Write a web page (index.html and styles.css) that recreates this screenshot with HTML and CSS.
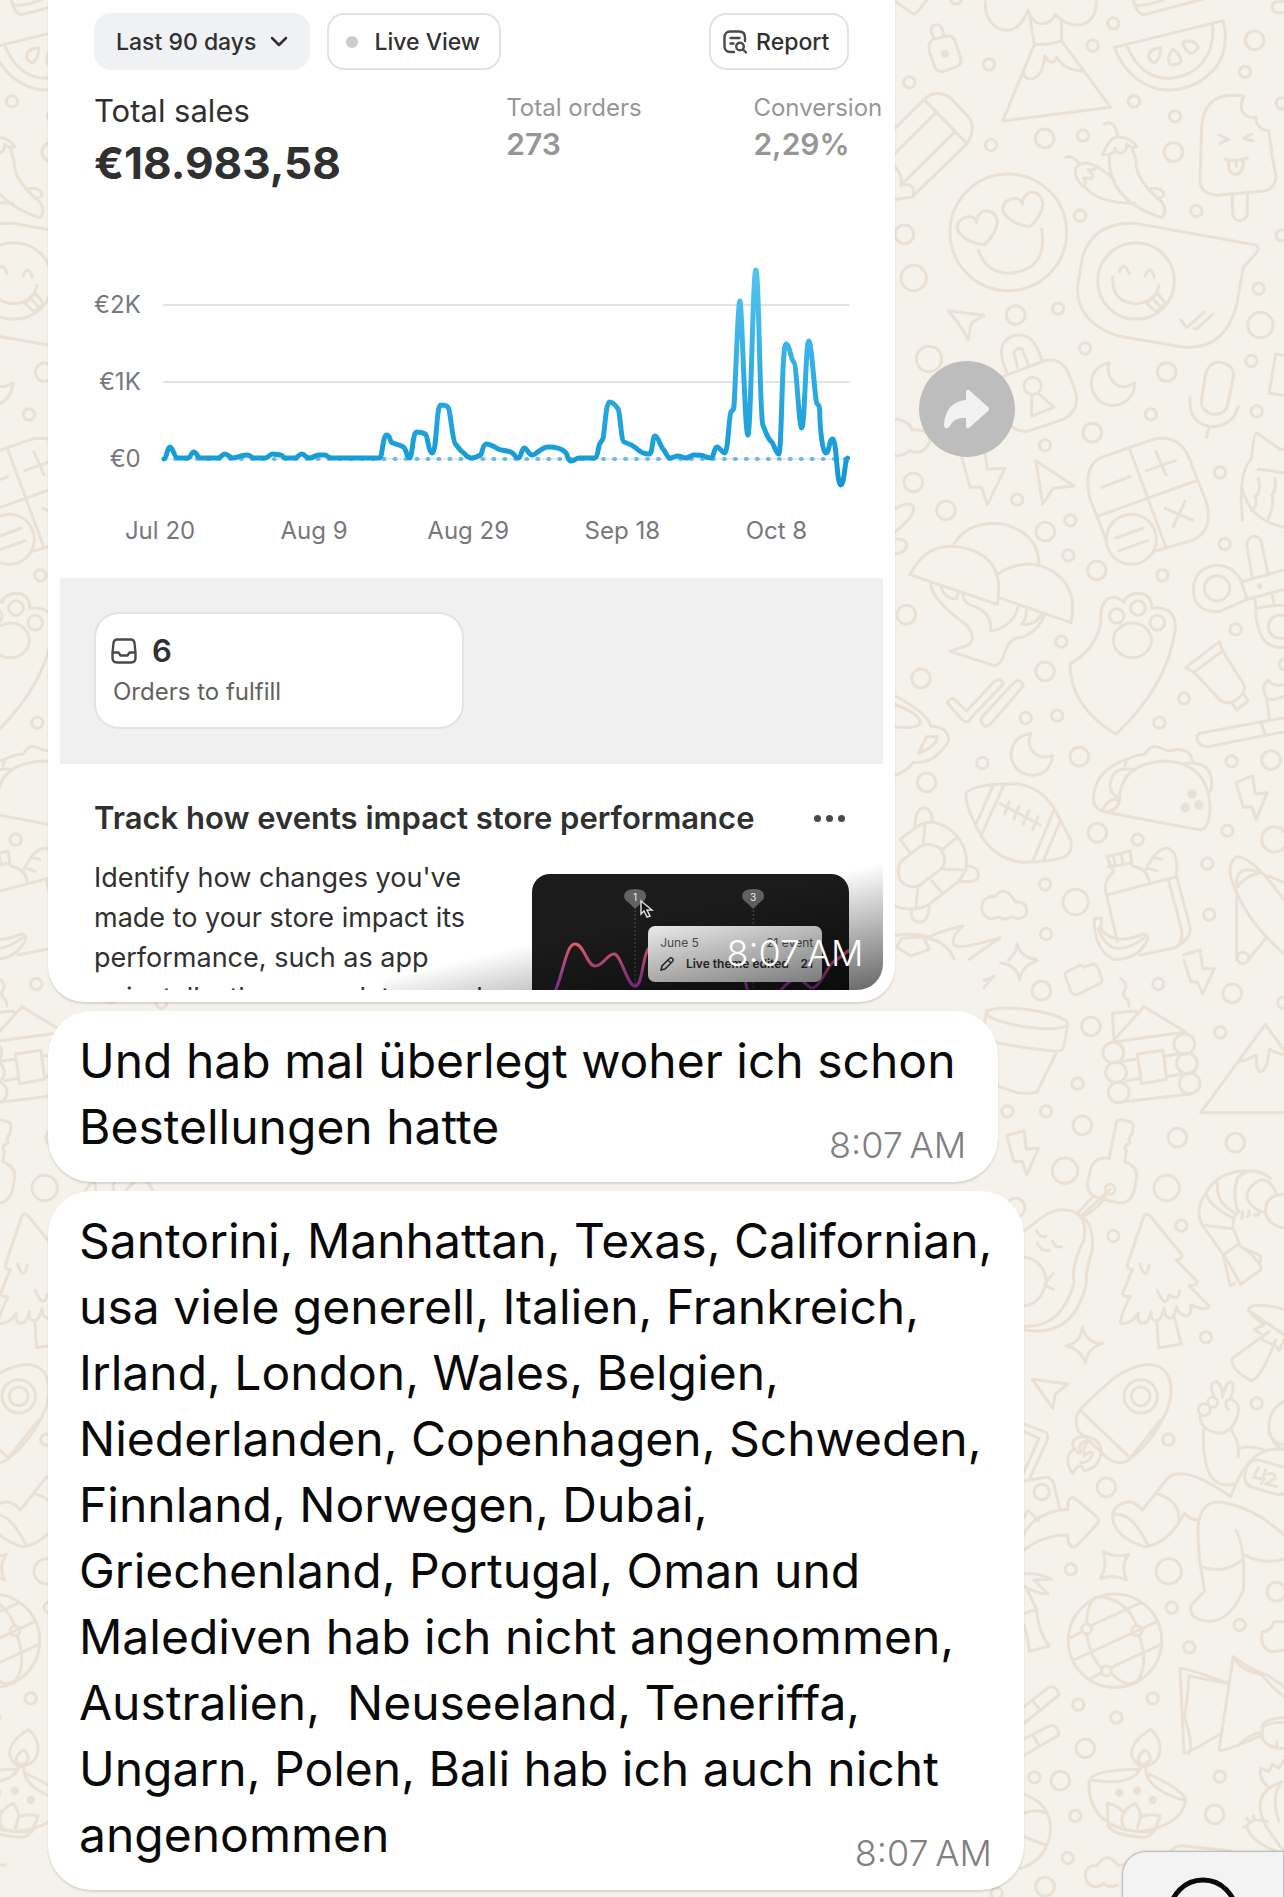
FILE: index.html
```html
<!DOCTYPE html>
<html lang="de">
<head>
<meta charset="utf-8">
<meta name="viewport" content="width=device-width, initial-scale=1">
<title>Chat</title>
<link rel="stylesheet" href="styles.css">
</head>
<body>
<svg class="wallpaper" viewBox="0 0 3852 5691" preserveAspectRatio="xMinYMin slice" aria-hidden="true">
  <defs>
    <g id="doodles">
      <g transform="translate(2640 0)">
        <g class="small">
          <circle cx="228" cy="-5" r="17"/><circle cx="700" cy="70" r="17"/><circle cx="638" cy="137" r="17"/><circle cx="327" cy="193" r="17"/><circle cx="88" cy="247" r="17"/><circle cx="762" cy="304" r="17"/><circle cx="885" cy="349" r="17"/><circle cx="609" cy="407" r="17"/><circle cx="333" cy="435" r="17"/><circle cx="600" cy="647" r="17"/><circle cx="949" cy="633" r="17"/><circle cx="534" cy="926" r="17"/><circle cx="615" cy="1045" r="17"/><circle cx="1136" cy="866" r="17"/><circle cx="1114" cy="1083" r="17"/><circle cx="1130" cy="1234" r="17"/><circle cx="813" cy="1243" r="17"/><circle cx="495" cy="1336" r="17"/><circle cx="1020" cy="1417" r="17"/><circle cx="1095" cy="216" r="17"/><circle cx="1205" cy="310" r="17"/><circle cx="1205" cy="706" r="17"/>
          <circle cx="1124" cy="121" r="28"/><circle cx="494" cy="415" r="28"/><circle cx="880" cy="456" r="28"/><circle cx="73" cy="703" r="28"/><circle cx="407" cy="945" r="28"/><circle cx="860" cy="1116" r="28"/><circle cx="637" cy="1298" r="28"/><circle cx="100" cy="1447" r="28"/>
          <circle cx="101" cy="834" r="38"/><circle cx="1141" cy="975" r="38"/><circle cx="147" cy="1077" r="38"/>
        </g>
        <path d="M40 0L95 38Q105 45 112 36L140 0M1212 5H1190Q1175 8 1176 22Q1180 38 1195 38H1212"/>
        <path d="M160 118L200 108Q217 105 226 125L242 175Q246 192 230 200L192 214Q173 218 165 202L148 155Q142 128 160 118ZM163 116L153 95Q152 75 168 74Q182 73 187 90L192 108"/><circle class="dot" cx="195" cy="161" r="8"/>
        <path d="M316 5Q312 55 350 83Q412 112 444 30Q455 60 470 68Q505 80 527 44Q560 80 605 74Q650 60 648 5M447 35L463 133M544 62V122M463 133Q510 136 544 122L692 322L368 363ZM430 210Q430 238 455 237Q488 230 495 168Q505 186 515 186Q528 184 530 170Q550 210 610 214"/>
        <path d="M760 0Q772 48 795 43L970 -3M768 15Q790 20 850 0M703 142L1030 62Q1050 150 1005 205Q935 285 830 266Q740 240 703 142ZM740 135Q780 235 865 235Q950 230 985 160Q1003 120 997 73M842 143Q805 145 806 172Q815 190 825 188Q842 175 842 143ZM878 148Q858 175 870 193Q890 198 902 186Q905 165 878 148ZM908 128Q940 112 955 142Q945 160 932 160Q915 152 908 128Z"/>
        <path d="M965 380Q972 285 1060 286L1092 288Q1072 330 1100 348Q1112 354 1128 352Q1130 390 1167 392Q1173 460 1188 530Q1185 570 1145 574L1010 586Q960 580 960 540ZM1057 584V638Q1060 662 1079 662Q1102 660 1102 636V580M1018 405L1046 418L1020 430M1115 402L1090 416L1118 423M1035 478Q1068 486 1102 474M1046 482V505Q1052 523 1068 523Q1090 520 1090 482M1069 482V498"/>
        <path d="M40 390L132 298Q165 268 208 290L265 350Q290 385 262 430L95 592L40 599M132 298L260 430M40 465L168 338M62 556L223 397M40 495Q72 525 62 556Q105 545 100 585"/>
        <circle cx="385" cy="697" r="175"/>
        <path id="heart" d="M290 668Q285 645 255 652Q225 665 233 690Q250 725 313 735Q350 700 352 665Q345 630 315 632Q290 640 290 668Z"/><use href="#heart" x="137" y="-55"/>
        <path d="M295 752Q320 820 388 820Q505 810 485 688"/>
        <path d="M673 372Q705 355 713 412M668 463Q690 410 713 412Q750 410 770 440Q755 448 740 432Q742 455 722 460Q710 460 705 445Q705 468 668 463ZM688 465Q680 600 845 653Q865 635 845 605Q765 540 768 480L758 450M557 472Q578 465 597 490M610 560Q580 530 587 505Q605 475 655 502Q640 512 625 510Q645 525 635 535L610 534Q622 545 610 560ZM655 502Q690 525 705 545M613 558Q650 610 765 610M803 567Q850 560 852 585Q845 595 830 595"/>
        <path d="M765 670L1128 735Q1140 745 1130 758L1090 802L1070 915Q1035 1050 910 1042L715 1008Q585 965 593 855L608 770Q640 665 765 670ZM698 832Q695 908 768 911Q825 908 837 855M718 815Q732 780 747 820M795 828Q810 790 823 832M800 910L833 880L858 912L828 935ZM815 893L840 918M903 960L920 983L972 937M942 985L948 988L1000 942"/><circle cx="768" cy="843" r="115"/>
        <path d="M205 932L312 946Q275 965 272 975L265 1020Q250 985 205 932Z"/>
        <path d="M368 1130L490 1083Q545 1068 568 1125L588 1180Q597 1235 550 1258L450 1292Q410 1300 385 1270M380 1115Q355 1060 370 1030Q400 992 445 1012Q468 1025 486 1080M412 1102L402 1060Q410 1038 427 1048L445 1093M455 1184V1248L522 1222L475 1180"/><circle cx="458" cy="1158" r="26"/>
        <path d="M688 1087Q630 1105 634 1155Q645 1215 700 1217Q760 1210 765 1148Q720 1175 695 1140Q678 1115 688 1087Z"/>
        <path d="M975 1130Q985 1085 1020 1087Q1065 1095 1060 1130L1043 1215Q1035 1245 1000 1243Q960 1232 965 1200ZM930 1193Q925 1275 1000 1280Q1060 1275 1075 1220M987 1283L980 1312"/>
        <path d="M40 1256Q85 1258 97 1290Q150 1285 150 1325Q130 1370 88 1352Q75 1368 40 1368M245 1370L270 1462L305 1462L322 1514L375 1405L322 1408L316 1365M468 1382L582 1458L520 1465L488 1512ZM40 1530Q85 1500 100 1520Q110 1545 40 1600M40 1616Q80 1615 80 1637Q78 1660 40 1662"/>
        <path d="M680 1625L628 1490Q610 1390 670 1370L820 1318Q900 1300 930 1380L980 1510Q1000 1590 940 1620L820 1655M750 1350L857 1640M655 1548L950 1442M828 1355L858 1425M800 1412L886 1382M708 1614L790 1584M718 1652L802 1622M855 1525L938 1560M915 1503L880 1580M665 1462L750 1430"/><circle cx="754" cy="1618" r="75"/>
        <path d="M1212 1065L1187 1063L1167 1180L1212 1186M1088 1560Q1072 1420 1115 1375Q1120 1300 1130 1298L1200 1348H1212M1135 1408L1212 1418M1088 1470Q1110 1560 1212 1582M1135 1435Q1145 1480 1125 1490Q1135 1515 1115 1532M1185 1435Q1190 1470 1175 1485Q1185 1515 1165 1555"/>
      </g>
      <g transform="translate(2640 1440)">
        <g class="small">
          <circle cx="412" cy="59" r="17"/><circle cx="571" cy="121" r="17"/><circle cx="565" cy="226" r="17"/><circle cx="847" cy="286" r="17"/><circle cx="1034" cy="192" r="17"/><circle cx="1067" cy="448" r="17"/><circle cx="544" cy="485" r="17"/><circle cx="437" cy="714" r="17"/><circle cx="532" cy="707" r="17"/><circle cx="307" cy="849" r="17"/><circle cx="912" cy="655" r="17"/><circle cx="838" cy="728" r="17"/><circle cx="1055" cy="844" r="17"/><circle cx="773" cy="1079" r="17"/><circle cx="1042" cy="1052" r="17"/><circle cx="982" cy="1151" r="17"/><circle cx="495" cy="1213" r="17"/><circle cx="988" cy="1304" r="17"/><circle cx="498" cy="1362" r="17"/><circle cx="1215" cy="553" r="17"/>
          <circle cx="198" cy="91" r="28"/><circle cx="496" cy="155" r="28"/><circle cx="650" cy="271" r="28"/><circle cx="79" cy="404" r="28"/><circle cx="123" cy="595" r="28"/><circle cx="495" cy="574" r="28"/><circle cx="598" cy="830" r="28"/><circle cx="1173" cy="840" r="28"/><circle cx="140" cy="907" r="28"/><circle cx="652" cy="1058" r="28"/>
          <circle cx="587" cy="1266" r="38"/><circle cx="1183" cy="1078" r="38"/>
        </g>
        <path d="M90 284L352 373Q375 250 280 212Q150 165 90 284ZM222 192Q265 120 370 132Q475 160 477 252M352 283Q440 225 520 275Q595 325 573 428L357 353M152 310Q155 360 260 435Q300 490 245 502L210 514L340 556Q362 560 375 515Q390 470 425 472Q475 455 495 402M183 318Q190 355 230 357L234 337M248 345Q250 370 285 380Q335 400 333 453Q400 440 415 378M440 388Q438 425 425 432Q465 440 487 400"/>
        <path d="M570 553Q570 680 708 763Q860 620 886 450Q890 375 815 385Q815 340 773 340Q735 345 733 368Q710 345 685 355Q660 370 663 420Q655 500 570 553Z"/><circle cx="710" cy="408" r="22"/><circle cx="774" cy="384" r="22"/><circle cx="832" cy="428" r="22"/><ellipse cx="757" cy="481" rx="57" ry="52"/>
        <path d="M202 668Q215 645 230 665L260 693L342 605Q362 590 370 612L275 712Q260 735 245 718ZM305 712L400 610Q420 590 430 618L332 732Q310 750 303 720Z"/>
        <path d="M1101 358L1020 394Q940 400 940 325Q945 260 1015 256Q1060 260 1082 300ZM1082 306L1212 270M1101 358L1212 328M1116 292L1101 195Q1102 170 1122 169Q1143 170 1146 195L1164 282M1124 350L1127 385Q1130 510 1212 502M1127 385Q1180 375 1212 376M1175 338L1183 375"/><circle cx="1011" cy="325" r="38"/><circle cx="1200" cy="440" r="35"/><circle class="dot" cx="1139" cy="318" r="4"/>
        <path d="M917 563L1018 485L1028 512L942 577ZM1028 512L1092 615Q1100 645 1055 667Q1035 672 1020 660L942 577M1055 668L1070 690L1104 663L1090 640"/>
        <path d="M950 775Q950 760 968 758L1212 713M950 775Q958 802 985 800L1212 755M1143 727L1155 762M1168 713L1160 655Q1140 620 1165 600Q1175 620 1212 615M1160 655Q1180 665 1212 648"/>
        <path d="M40 645Q145 700 152 738Q210 742 205 785Q160 855 100 847Q80 875 40 888M40 672Q120 700 122 730Q110 748 40 740M140 770H172Q170 800 115 820Z"/>
        <path d="M453 760Q395 770 393 825Q400 880 455 886Q510 885 518 827Q475 840 455 810Q440 785 453 760Z"/>
        <path d="M258 940Q275 912 400 911Q480 915 525 990L572 1080Q580 1120 550 1132Q510 1145 430 1147Q350 1140 305 1070Q255 980 258 940ZM338 920L290 1028M372 914L303 1068M522 990L458 1144M542 1020L490 1142M360 970L480 1035M388 965L374 1002M417 978L402 1016M447 992L430 1032M474 1010L458 1048"/>
        <path d="M670 995L960 1050Q985 1050 990 990Q990 850 855 843Q720 850 718 960Q715 995 670 995Q640 985 640 955Q645 870 740 838Q775 822 795 823Q815 785 850 808Q870 815 890 808Q935 810 938 848M915 850Q1000 840 995 920L988 940M765 870Q690 855 690 920Q695 945 712 950M667 990Q690 950 710 960M740 838L735 858"/><circle class="dot" cx="936" cy="942" r="10"/><circle class="dot" cx="956" cy="975" r="10"/><circle class="dot" cx="916" cy="983" r="10"/>
        <path d="M1068 907L1118 888L1126 942L1162 938L1128 1018L1115 980L1090 982Z"/>
        <path d="M60 1078L105 1045Q145 1010 200 1042Q270 1090 258 1170L235 1205L145 1275Q90 1300 40 1275M105 1040Q105 985 132 983Q160 990 155 1028M258 1158Q300 1160 295 1190Q290 1210 240 1204M95 1290Q90 1325 120 1327Q145 1325 148 1275M62 1145L120 1100Q150 1085 180 1105Q205 1140 185 1165L120 1215Q85 1230 60 1200Q48 1170 62 1145ZM60 1078L88 1115M135 1035L130 1088M232 1072L187 1108M258 1170L190 1167M185 1237L155 1202M108 1283L113 1224"/>
        <path d="M325 1315Q300 1300 307 1270Q320 1245 345 1250Q375 1210 405 1265Q445 1265 440 1300Q425 1325 393 1310Q375 1325 355 1310Q340 1320 325 1315Z"/>
        <path d="M40 1370Q70 1355 150 1370Q190 1350 248 1338Q210 1375 222 1395Q240 1410 360 1373L268 1438M130 1370Q205 1385 222 1438M50 1400L65 1375L130 1370L148 1408L92 1428ZM385 1440Q410 1420 411 1392Q425 1435 470 1438"/>
        <path d="M680 1245L890 1190L930 1340Q935 1380 880 1405L780 1425M680 1245Q665 1210 700 1175L680 1130L750 1113L757 1158Q800 1165 808 1205M685 1160L755 1150M700 1128L706 1155M722 1122L730 1152M680 1245L712 1385M865 1200L905 1350Q910 1385 890 1400M797 1170Q830 1100 865 1105Q900 1120 887 1190M823 1133L845 1138M805 1165L832 1173M643 1315H665L662 1345Q700 1400 790 1362Q810 1365 800 1385Q770 1440 700 1438Q640 1405 643 1315ZM655 1345Q690 1450 795 1372"/>
        <path d="M1212 1260Q1120 1130 1070 1130Q1040 1150 1055 1200Q1100 1330 1212 1420M1070 1250V1440M1072 1222Q1060 1150 1140 1178Q1090 1190 1072 1222ZM1165 1188L1212 1208M1155 1378L1105 1440M910 1425L960 1410L965 1440"/>
      </g>
      <g transform="translate(2952 2880)">
        <g class="small">
          <circle cx="523" cy="72" r="17"/><circle cx="709" cy="217" r="17"/><circle cx="281" cy="371" r="17"/><circle cx="70" cy="454" r="17"/><circle cx="186" cy="454" r="17"/><circle cx="388" cy="828" r="17"/><circle cx="592" cy="797" r="17"/><circle cx="666" cy="1132" r="17"/><circle cx="818" cy="1330" r="17"/><circle cx="777" cy="-6" r="17"/><circle cx="898" cy="128" r="17"/>
          <circle cx="172" cy="92" r="28"/><circle cx="321" cy="199" r="28"/><circle cx="745" cy="100" r="28"/><circle cx="295" cy="496" r="28"/><circle cx="580" cy="533" r="28"/><circle cx="754" cy="548" r="28"/><circle cx="95" cy="743" r="28"/>
          <circle cx="243" cy="632" r="38"/><circle cx="548" cy="684" r="38"/>
        </g>
        <path d="M50 8Q100 15 107 60Q115 15 160 2M0 62L30 48L0 82M245 50Q240 38 250 35L290 15L300 22L325 12Q335 10 342 25L354 58Q355 68 345 72L280 104Q265 105 260 92ZM600 0L620 65L640 66L656 102L691 26L656 26L652 0"/>
        <ellipse cx="130" cy="175" rx="122" ry="26" transform="rotate(8 130 175)"/>
        <path d="M250 200L238 265Q235 275 200 272Q90 262 0 238M8 150L0 200M218 275L160 395Q150 402 100 398L0 365"/>
        <path d="M410 55Q430 70 425 85Q410 105 432 120L435 138M390 240L385 160L453 153L458 160M390 240L480 140L605 216L390 246M460 282L537 271L548 358L473 371ZM415 304L460 297M541 289L580 282M428 362L470 355M548 350L590 343M405 427L620 402"/><circle cx="388" cy="278" r="31"/><circle cx="396" cy="337" r="31"/><circle cx="404" cy="397" r="31"/><circle cx="601" cy="252" r="31"/><circle cx="609" cy="310" r="31"/><circle cx="617" cy="370" r="31"/>
        <path d="M900 458H650L844 193L900 270M765 305Q790 300 817 285Q815 335 830 335Q850 330 856 268Q875 280 900 284"/>
        <path d="M68 527L120 512L127 568L163 565L128 645L115 604L90 605Z"/>
        <path d="M375 595L398 485Q402 475 425 482Q450 485 447 500L445 520Q430 535 438 548Q415 560 427 572L422 605Q465 620 457 660L450 695Q435 735 400 728L345 715Q300 700 313 655L322 620Q335 590 375 595ZM378 688L295 765M325 712L285 755M370 700Q350 740 300 768"/><circle cx="378" cy="688" r="15"/>
        <path d="M110 820L170 775Q220 735 275 757Q310 775 300 840Q260 920 270 970Q230 1110 110 1098M300 775Q330 800 325 870Q305 930 307 970Q270 1140 110 1108M110 890Q180 895 187 965Q170 1040 110 1038M158 812Q165 832 185 830M160 848Q170 875 195 871M205 842Q210 862 232 861M208 940L190 962L182 975L208 988"/>
        <path d="M480 768Q488 755 500 770L592 882Q600 895 577 900L640 965Q640 975 615 977L675 1038Q670 1055 620 1035Q625 1068 605 1068Q580 1060 578 1040Q570 1080 555 1074Q540 1070 540 1045Q530 1085 515 1082Q498 1080 502 1055Q495 1090 475 1090Q458 1085 463 1060Q440 1095 410 1090Q405 1080 438 1010Q420 1010 415 1002L445 928Q430 930 430 915L455 840ZM518 1085L524 1163L592 1152L572 1075M467 913Q485 965 496 915M520 992Q545 1050 555 1005Q585 1025 587 992"/>
        <path d="M900 805Q840 790 845 745Q850 705 900 702M878 705Q860 650 825 662Q775 690 795 725Q810 750 845 758M860 655Q800 610 760 655Q745 700 760 750M785 632Q700 635 665 700Q630 750 655 795L718 885L765 850Q760 830 747 808Q745 765 765 755M700 668Q695 730 755 760M668 705Q680 740 748 775M655 795L745 806M718 885L738 977L752 970M723 890L770 973L830 930Q835 905 765 855M828 912L830 888L770 860M775 755Q778 770 772 775M795 752Q798 765 790 770M810 765Q825 770 825 755"/>
        <path d="M296 1100Q305 1150 356 1150Q308 1165 304 1210Q290 1165 245 1158Q290 1150 296 1100ZM145 1258L252 1272L213 1303L207 1345Z"/>
        <path d="M792 1050Q800 1030 850 1038Q880 1040 900 1050M792 1050L900 1125M800 1060L840 1095L810 1108L835 1125L835 1140L875 1158L885 1172L900 1140M855 1115L745 1195Q735 1225 800 1262Q830 1260 875 1140"/>
        <path d="M288 1350Q340 1295 395 1250Q500 1185 545 1235Q580 1290 540 1370Q500 1450 440 1495M288 1350Q265 1380 285 1415L345 1470Q380 1510 410 1508Q425 1508 440 1495L288 1350"/><circle cx="470" cy="1309" r="50"/><circle cx="470" cy="1309" r="28"/>
        <path d="M690 1310Q670 1265 700 1265Q715 1280 716 1312Q725 1260 745 1268Q750 1290 740 1315Q770 1330 762 1360Q750 1415 705 1420Q645 1410 650 1365M733 1350Q715 1320 740 1318M658 1410Q655 1550 705 1570Q730 1580 752 1570M742 1410Q768 1450 763 1490M900 1325Q850 1350 855 1410Q870 1470 915 1475"/><circle cx="686" cy="1327" r="15"/><circle cx="661" cy="1349" r="18"/><path d="M110 1388L180 1415Q195 1420 190 1440L135 1560M110 1410L165 1435L118 1540"/>
      </g>
      <g transform="translate(2952 4260)">
        <g class="small">
          <circle cx="553" cy="59" r="17"/><circle cx="260" cy="448" r="17"/><circle cx="563" cy="563" r="17"/><circle cx="767" cy="615" r="17"/><circle cx="616" cy="682" r="17"/><circle cx="283" cy="854" r="17"/><circle cx="506" cy="835" r="17"/><circle cx="397" cy="893" r="17"/><circle cx="151" cy="1072" r="17"/><circle cx="274" cy="1188" r="17"/><circle cx="251" cy="1314" r="17"/><circle cx="707" cy="1070" r="17"/><circle cx="38" cy="1420" r="17"/>
          <circle cx="367" cy="202" r="28"/><circle cx="877" cy="515" r="28"/><circle cx="304" cy="985" r="28"/><circle cx="229" cy="1082" r="28"/><circle cx="692" cy="1183" r="28"/><circle cx="183" cy="1400" r="28"/>
          <circle cx="554" cy="454" r="38"/>
        </g>
        <path d="M440 112L530 0M265 160Q235 115 270 85Q255 55 300 48Q350 55 352 95Q345 145 300 152Q290 120 265 160ZM275 90Q285 105 290 95Q280 65 315 62Q295 80 300 108Q325 85 325 105Q315 130 290 128"/>
        <path d="M110 185L185 172Q205 172 210 195L228 268M115 395Q170 345 252 345Q250 385 275 380L340 312Q348 302 338 290L272 235Q250 225 252 268Q150 275 115 350M118 295L132 272L165 302"/><circle cx="173" cy="216" r="23"/>
        <path d="M475 270L550 175Q600 130 740 230Q790 90 870 88L900 88M475 270Q460 250 435 245Q390 250 385 290Q390 350 480 380Q550 375 602 280Q615 300 645 300M515 220Q590 240 585 305M388 285Q440 270 492 375M765 85Q800 75 840 90M855 40Q870 70 900 75"/>
        <rect x="783" y="130" width="140" height="84" rx="32" transform="rotate(16 853 172)"/>
        <path d="M823 143L808 172L842 178M845 150L832 192M852 162Q875 155 873 175L845 192L878 200"/>
        <path d="M662 512Q640 400 642 320Q650 230 730 250Q820 270 900 345M755 330Q785 380 778 510Q740 600 680 604Q610 600 622 555L662 512M650 440Q720 465 778 418M778 402Q830 435 900 418"/>
        <path d="M357 395Q395 415 433 403Q408 440 428 480Q390 462 350 475Q372 435 357 395Z"/>
        <circle cx="393" cy="662" r="140"/>
        <path d="M318 618L472 548M262 652L292 636M270 720L520 604M320 776L350 760M382 742L530 674M308 612Q310 530 350 530Q430 540 458 618M308 640Q320 720 355 745M382 760Q430 810 462 780Q495 730 465 645"/><circle cx="308" cy="627" r="15"/><circle cx="459" cy="632" r="15"/><circle cx="367" cy="753" r="15"/>
        <path d="M110 462Q160 455 202 478L150 480L192 522Q150 520 110 492M130 510L158 568L115 582M158 568Q160 630 195 678L135 695Q135 650 115 605"/>
        <path d="M110 868L190 805Q215 790 225 825L110 918M148 845L170 872M110 962L195 918Q220 910 225 945L110 1012M148 948L165 978M110 1120Q200 1145 200 1230Q190 1320 110 1345M115 1182Q155 1165 182 1178M115 1248L188 1276"/>
        <path d="M588 745Q595 740 735 790M588 745L600 1000Q605 1005 712 940M615 1000Q630 970 600 890Q610 850 615 768L730 790M748 710L705 990Q710 1000 835 945M748 710Q800 750 850 765L900 800M752 720Q780 755 835 765Q860 800 900 830M765 975Q790 945 835 935"/>
        <path d="M835 920Q840 895 900 893M835 920Q860 905 900 908M835 920V955Q850 985 900 985M878 965V985M870 605Q860 635 835 635Q825 680 860 695Q880 695 900 690M870 605H900"/>
        <path d="M500 928Q440 965 443 1005Q455 1040 480 1040Q525 1030 528 990Q530 955 500 928ZM483 990Q460 1005 463 1025Q480 1045 498 1020Q500 1000 483 990M470 1042Q450 1100 318 1080Q325 1050 470 1048M485 1042Q485 1110 605 1142Q600 1110 490 1060M315 1085Q310 1215 460 1235Q590 1220 605 1142M370 1150L372 1210Q420 1240 510 1235L528 1188Q500 1180 470 1190Q470 1170 452 1150Q430 1160 420 1178Q400 1155 370 1150ZM420 1178Q405 1200 425 1230M470 1190L460 1225M372 1215Q380 1245 480 1252Q500 1250 505 1237"/><circle class="dot" cx="406" cy="1118" r="8"/><circle class="dot" cx="459" cy="1112" r="8"/><circle class="dot" cx="506" cy="1140" r="8"/>
        <path d="M900 1020L885 1045L865 1032L855 1055L830 1045Q825 1080 850 1098M895 1085Q790 1120 850 1225L900 1295M890 1090Q860 1130 885 1205M850 1205Q800 1190 788 1220Q800 1265 880 1295M788 1195L798 1205M808 1188L810 1200M778 1220H788"/>
        <path d="M330 1400Q300 1390 305 1355Q315 1335 338 1338Q370 1290 400 1335H430M330 1400Q350 1400 358 1390Q375 1405 400 1395M560 1295Q575 1275 600 1278L740 1292"/>
      </g>
    </g>
  </defs>
  <use href="#doodles"/>
  <use href="#doodles" x="-3366"/>
</svg>

<main class="chat">
  <div class="row">
    <article class="bubble bubble-photo">
      <div class="photo">
        <section class="overview">
          <div class="toolbar">
            <button class="chip chip-filled" type="button">Last 90 days
              <svg width="18" height="12" viewBox="0 0 18 12" fill="none" stroke="currentColor" stroke-width="2.5" stroke-linecap="round" stroke-linejoin="round" aria-hidden="true"><path d="M2 2l7 7 7-7"/></svg>
            </button>
            <button class="chip chip-live" type="button"><span class="live-dot"></span>Live View</button>
            <button class="chip chip-report" type="button">
              <svg width="24" height="24" viewBox="0 0 24 24" fill="none" stroke="#4a4a4a" stroke-width="2.4" stroke-linecap="round" aria-hidden="true"><path d="M11 22H7.500Q1.500 22 1.500 16V7.500Q1.500 1.500 7.500 1.500H16Q22 1.500 22 7.500V11M7.500 8H16.500M7.500 13.500H10.500M20 19.500L23 22.500"/><circle cx="17" cy="16.500" r="3.800"/></svg>
              Report
            </button>
          </div>
          <dl class="stats">
            <div class="stat stat-main"><dt>Total sales</dt><dd>€18.983,58</dd></div>
            <div class="stat"><dt>Total orders</dt><dd>273</dd></div>
            <div class="stat"><dt>Conversion</dt><dd>2,29%</dd></div>
          </dl>
          <div class="chart">
            <div class="y-axis"><span>€2K</span><span>€1K</span><span>€0</span></div>
            <svg class="plot" viewBox="162 260 688 240" preserveAspectRatio="none" role="img" aria-label="Total sales, last 90 days">
              <defs>
                <linearGradient id="sales" gradientUnits="userSpaceOnUse" x1="0" y1="270" x2="0" y2="485"><stop offset="0" stop-color="#52c2f3"/><stop offset="1" stop-color="#0f97d3"/></linearGradient>
              </defs>
              <path d="M162 305H850M162 382H850" stroke="#e3e3e3" stroke-width="2"/>
              <path d="M162 459H850" stroke="#ececee" stroke-width="2"/>
              <path d="M163 459H850" stroke="#6cbbe0" stroke-width="4" stroke-linecap="round" stroke-dasharray="1 10"/>
              <path class="sales-line" d="M163 459C166 458 166 447 169 447S173 458 177 458H187C190 458 190 452 193 452S196 458 200 458H217C220 458 221 454 224 454S229 458 232 458S241 455 246 455S250 458 253 458H264C268 458 268 454 272 454S277 455 280 455S281 458 285 458H294C297 458 298 454 301 454S305 458 309 458S314 455 318 455H324C327 455 327 458 331 458H379C382 458 382 435 386 435S389 442 392 443S400 445 403 447S406 458 409 458S412 432 416 432S423 433 425 434S428 453 432 453S436 405 440 405S446 405 448 408S452 441 455 444S459 450 462 452S467 458 471 458S478 456 480 455S482 444 486 444S494 447 498 449S508 450 512 453S515 458 518 458S521 448 524 448S528 455 532 455S541 447 548 447S562 449 565 452S567 461 571 461S575 458 579 458H595C598 457 598 445 600 443S602 441 603 438S606 402 609 402S616 406 618 409S621 441 624 442S634 446 637 449S645 454 649 454S652 436 655 436S660 446 663 449S667 458 670 458S675 456 678 456S683 458 686 458S691 455 694 455S702 455 704 456S708 458 711 458S714 447 717 447S722 453 725 453S729 416 731 412S733 413 734 407S738 301 740 301S745 435 748 435S753 270 756 270S760 418 763 425S768 439 771 441S776 454 779 454S782 344 786 344S791 360 794 362S799 428 802 428S806 341 809 341S815 399 817 403S820 404 820 412S822 453 826 453S829 439 833 439S837 485 841 485S845 458 848 458"/>
            </svg>
          </div>
          <div class="x-axis"><span>Jul 20</span><span>Aug 9</span><span>Aug 29</span><span>Sep 18</span><span>Oct 8</span></div>
        </section>

        <section class="fulfil-band">
          <div class="fulfil-card">
            <div class="fulfil-count">
              <svg width="26" height="26" viewBox="0 0 26 26" fill="none" stroke="#4a4a4a" stroke-width="2.400" stroke-linejoin="round" aria-hidden="true"><path d="M6 1.500H20Q23 1.500 23.500 5L24.500 15V20Q24.500 24.500 20 24.500H6Q1.500 24.500 1.500 20V15L2.500 5Q3 1.500 6 1.500ZM1.500 14.500H7.500L9.500 17.500H16.500L18.500 14.500H24.500"/></svg>
              <strong>6</strong>
            </div>
            <span>Orders to fulfill</span>
          </div>
        </section>

        <section class="events">
          <div class="events-head">
            <h2>Track how events impact store performance</h2>
            <button class="more" type="button" aria-label="More"><i></i><i></i><i></i></button>
          </div>
          <div class="events-body">
            <p>Identify how changes you've made to your store impact its performance, such as app uninstalls, theme updates, and</p>
            <div class="preview">
              <svg class="preview-art" viewBox="0 0 317 116" preserveAspectRatio="none" aria-hidden="true">
                <defs><linearGradient id="trend" gradientUnits="userSpaceOnUse" x1="0" y1="68" x2="0" y2="116"><stop offset="0" stop-color="#f2606c"/><stop offset="1" stop-color="#9a3cb8"/></linearGradient></defs>
                <path d="M103 36V116M221 36V116" stroke="#555" stroke-width="1" stroke-dasharray="2 2"/>
                <path d="M22 120C32 98 34 70 43 70S55 92 63 92S75 80 82 80S95 112 103 112S110 80 117 74M213 108Q215 114 216 120M246 120C254 108 262 104 268 106S275 114 281 114C290 110 295 92 301 88S312 80 317 76" fill="none" stroke="url(#trend)" stroke-width="3"/>
                <path d="M103 35L97 29Q92 26 92 22Q92 15 103 15Q114 15 114 22Q114 26 109 29ZM221 35L215 29Q210 26 210 22Q210 15 221 15Q232 15 232 22Q232 26 227 29Z" fill="#626262"/>
                <text x="103" y="27" class="pin">1</text><text x="221" y="27" class="pin">3</text>
              </svg>
              <div class="tip">
                <div><span>June 5</span><span>21 event</span></div>
                <div class="tip-strong">
                  <svg width="14" height="14" viewBox="0 0 14 14" fill="none" stroke="currentColor" stroke-width="1.500" aria-hidden="true"><path d="M1 13L2 9L9 2Q11 0 12.500 1.500Q14 3 12 5L5 12ZM8 3L11 6"/></svg>
                  <span>Live theme edited</span><span>21</span>
                </div>
              </div>
              <svg class="cursor" width="15" height="20" viewBox="0 0 15 20" aria-hidden="true"><path d="M2 2V15L5 12L8 18L11 17L8 11H13Z" fill="#111" stroke="#ddd" stroke-width="1.500"/></svg>
            </div>
          </div>
        </section>
        <div class="shade"></div>
        <time class="photo-time">8:07&#8201;AM</time>
      </div>
    </article>
    <button class="forward" type="button" aria-label="Forward">
      <svg width="46" height="40" viewBox="0 0 46 40" aria-hidden="true"><path d="M22 3Q22 0 25 1L44 18Q46 20 44 22L25 39Q22 40 22 37V29Q10 28 6 37Q4 40 1 39Q0 38 0 35Q2 13 22 11Z" fill="#f2f2f2"/></svg>
    </button>
  </div>

  <article class="bubble bubble-text bubble-short">
    <p>Und hab mal überlegt woher ich schon Bestellungen hatte</p>
    <time>8:07&#8201;AM</time>
  </article>

  <article class="bubble bubble-text bubble-long">
    <p>Santorini, Manhattan, Texas, Californian, usa viele generell, Italien, Frankreich, Irland, London, Wales, Belgien, Niederlanden, Copenhagen, Schweden, Finnland, Norwegen, Dubai, Griechenland, Portugal, Oman und Malediven hab ich nicht angenommen, Australien,&nbsp; Neuseeland, Teneriffa, Ungarn, Polen, Bali hab ich auch nicht angenommen</p>
    <time>8:07&#8201;AM</time>
  </article>
</main>

<button class="scroll-down" type="button" aria-label="Scroll to bottom">
  <svg width="76" height="20" viewBox="0 0 76 20" fill="none" stroke="#0a0a0a" stroke-width="5" aria-hidden="true"><circle cx="38" cy="36" r="33"/></svg>
</button>
</body>
</html>
```
FILE: styles.css
```css
* { box-sizing: border-box; }

body {
  position: relative;
  min-height: 100vh;
  margin: 0;
  overflow-x: hidden;
  background: #f5f2eb;
  color: #0a0a0a;
  font-family: Inter, "Liberation Sans", sans-serif;
}

button { font: inherit; color: inherit; cursor: pointer; }
p, h2, dl, dd { margin: 0; }

/* Wallpaper */
.wallpaper {
  position: absolute;
  inset: 0;
  width: 100%;
  height: 100%;
  fill: none;
  stroke: #eae0d3;
  stroke-width: 9;
  stroke-linecap: round;
  stroke-linejoin: round;
}
.wallpaper .dot { fill: #eae0d3; }

/* Conversation */
.chat {
  position: relative;
  display: flex;
  flex-direction: column;
  gap: 9px;
  padding-bottom: 7px;
}
.row { display: flex; align-items: flex-start; gap: 24px; }

.bubble {
  margin-left: 48px;
  border-radius: 44px;
  background: #fff;
  box-shadow: 0 2px 2px rgba(0, 0, 0, .12);
}
.bubble-photo {
  flex: none;
  width: 66%;
  padding: 0 12px 12px;
  border-radius: 0 0 36px 36px;
}
.bubble-text {
  display: grid;
  padding: 17px 18px 17px 31px;
}
.bubble-short { width: 74%; }
.bubble-long { width: 76%; }
.bubble-text p {
  grid-area: 1 / 1;
  padding-bottom: 5px;
  font-size: 48px;
  line-height: 66px;
}
.bubble-text time {
  grid-area: 1 / 1;
  align-self: end;
  justify-self: end;
  margin-right: 14px;
  color: #808080;
  font-size: 36px;
  font-weight: 300;
  line-height: 40px;
}

/* Shared store screenshot */
.photo {
  position: relative;
  overflow: hidden;
  border-radius: 0 0 26px 26px;
  color: #303030;
}
.overview { padding: 13px 34px 32px 34px; }

.toolbar { display: flex; gap: 17px; }
.chip {
  display: flex;
  align-items: center;
  height: 57px;
  padding: 0 20px;
  border: 2px solid #e3e3e3;
  border-radius: 17px;
  background: #fff;
  font-size: 23px;
  font-weight: 500;
  white-space: nowrap;
}
.chip-filled { gap: 14px; border-color: #f0f1f3; background: #f0f1f3; }
.chip-live { gap: 16px; padding: 0 19px 0 17px; }
.chip-report { gap: 9px; margin-left: auto; padding: 0 18px 0 12px; }
.live-dot { width: 12px; height: 12px; border-radius: 50%; background: #ccc; }

.stats {
  display: grid;
  grid-template-columns: minmax(0, 412fr) minmax(0, 247fr) minmax(0, 96fr);
  height: 190px;
  padding-top: 22px;
  white-space: nowrap;
}
.stat { color: #969696; }
.stat dt { padding-top: 1px; font-size: 24px; line-height: 30px; }
.stat dd { margin-top: 3px; font-size: 30px; font-weight: 600; line-height: 36px; }
.stat-main { color: #303030; }
.stat-main dt { padding-top: 0; font-size: 31px; line-height: 38px; }
.stat-main dd { margin-top: 5px; font-size: 44px; font-weight: 700; line-height: 56px; }

.chart { display: flex; }
.y-axis {
  display: flex;
  flex: 0 0 67px;
  flex-direction: column;
  padding: 6px 22px 0 0;
  text-align: right;
}
.y-axis span { line-height: 77px; }
.y-axis, .x-axis { color: #77777c; font-size: 24px; }
.plot { flex: 1; min-width: 0; height: 240px; overflow: visible; fill: none; }
.sales-line {
  stroke: url(#sales);
  stroke-width: 5;
  stroke-linecap: round;
  stroke-linejoin: round;
}
.x-axis {
  display: grid;
  grid-template-columns: repeat(5, 1fr);
  margin: 16px -4px 0 -11px;
  line-height: 30px;
  text-align: center;
}

.fulfil-band { padding: 34px 35px 35px 34px; background: #f0f0f0; }
.fulfil-card {
  width: 49%;
  height: 117px;
  padding: 19px 16px;
  border: 2px solid #e3e3e3;
  border-radius: 25px;
  background: #fff;
  color: #616161;
  font-size: 24px;
  line-height: 30px;
}
.fulfil-card > span { padding-left: 1px; }
.fulfil-count {
  display: flex;
  align-items: center;
  gap: 15px;
  margin-bottom: 8px;
  line-height: 36px;
}
.fulfil-count svg { margin-left: -1px; }
.fulfil-count strong { color: #303030; font-size: 31px; font-weight: 600; }

.events { padding: 36px 34px 0 34px; }
.events-head { display: flex; align-items: center; justify-content: space-between; height: 36px; }
.events h2 { font-size: 31px; font-weight: 600; line-height: 36px; white-space: nowrap; }
.more { display: flex; gap: 5px; padding: 0 4px; border: 0; background: none; }
.more i { width: 7px; height: 7px; border-radius: 50%; background: #4a4a4a; }
.events-body {
  display: flex;
  justify-content: space-between;
  height: 133px;
  margin-top: 21px;
  overflow: hidden;
}
.events-body p { width: 53%; padding-top: 1px; font-size: 27px; line-height: 40px; }
.preview {
  position: relative;
  width: 42%;
  height: 116px;
  margin-top: 17px;
  overflow: hidden;
  border-radius: 18px 18px 0 0;
  background: #1b1b1b;
}
.preview-art { display: block; width: 100%; height: 100%; }
.pin { fill: #eee; stroke: none; font-size: 10px; text-anchor: middle; }
.tip {
  position: absolute;
  top: 52px;
  left: 116px;
  width: 174px;
  height: 56px;
  padding: 7px 9px 0 12px;
  border-radius: 7px;
  background: #f4f4f4;
  color: #555;
  font-size: 12px;
  line-height: 20px;
}
.tip div { display: flex; justify-content: space-between; }
.tip .tip-strong { align-items: center; color: #303030; font-size: 12px; font-weight: 600; line-height: 22px; }
.cursor { position: absolute; top: 25px; left: 107px; }

.shade {
  position: absolute;
  right: 0;
  bottom: 0;
  width: 500px;
  height: 130px;
  background: linear-gradient(167deg, rgba(0, 0, 0, 0) 48%, rgba(0, 0, 0, .6) 100%);
}
.photo-time {
  position: absolute;
  right: 20px;
  bottom: 17px;
  color: #fff;
  font-size: 36px;
  font-weight: 300;
  line-height: 40px;
}

.forward {
  display: grid;
  flex: none;
  place-items: center;
  width: 96px;
  height: 96px;
  margin-top: 361px;
  padding: 0;
  border: 0;
  border-radius: 50%;
  background: #bdbdbd;
}

.scroll-down {
  position: fixed;
  right: 0;
  bottom: 0;
  display: flex;
  align-items: flex-end;
  justify-content: center;
  width: 162px;
  height: 46px;
  padding: 0;
  border: 1px solid #bcbcbc;
  border-bottom: 0;
  border-radius: 24px 0 0 0;
  background: #f3f3f3;
  box-shadow: 0 0 3px rgba(0, 0, 0, .15);
}
.scroll-down svg { display: block; overflow: hidden; }
```
